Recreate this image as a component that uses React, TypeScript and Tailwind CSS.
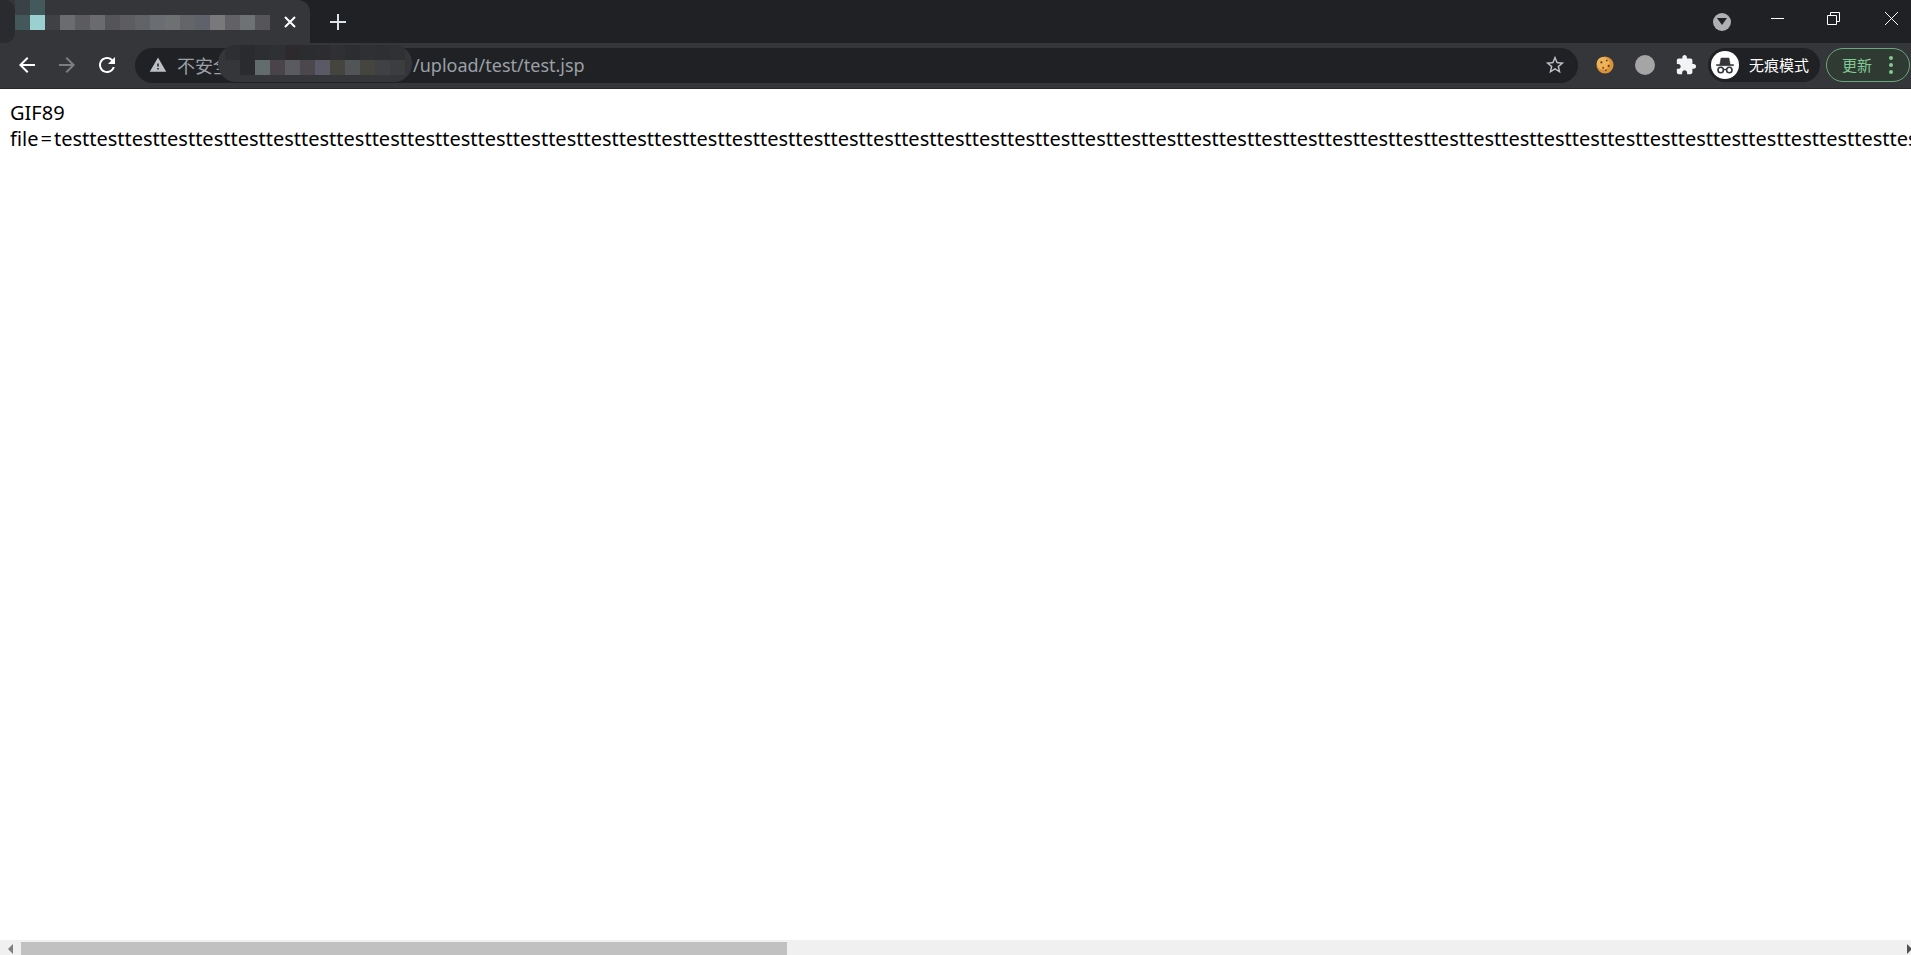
const tabTop = ['#3b4246', '#44595c'];
const tabRow = ['#44585c', '#9bd0d0', '#3f4145', '#6b6c6e', '#5c5b60', '#6a6b6d', '#555459', '#5d5d61', '#616367', '#6a6d71', '#6e7072', '#636569', '#5f626b', '#79797b', '#626165', '#6e7274', '#55555a'];
const urlTop = ['#2e2f32', '#2a2b2e', '#2d2e31', '#2f3033', '#2c2a2c', '#2b2c2f', '#2d2d30', '#2f3033', '#2c2d2f', '#2f3033', '#2e2f32', '#303134'];
const urlRow = ['#35363a', '#2a2b2e', '#636c6d', '#4a4347', '#5a5a61', '#4c474c', '#5a5a66', '#45443f', '#515558', '#46443f', '#404145', '#3c3d3e'];

const Tiles = ({ colors }: { colors: string[] }) => (
  <div className="flex h-[15px]">
    {colors.map((c, i) => (
      <div key={i} className="w-[15px] h-[15px]" style={{ backgroundColor: c }} />
    ))}
  </div>
);

const Icon = ({ d, className }: { d: string; className: string }) => (
  <svg viewBox="0 0 24 24" className={className} fill="currentColor">
    <path d={d} />
  </svg>
);

const App = () => {
  return (
    <div className="h-[955px] w-[1911px] flex flex-col overflow-hidden bg-white font-['Noto_Sans',sans-serif]">
      {/* Tab strip */}
      <div className="h-[43px] shrink-0 flex items-center bg-[#202124] relative">
        <div className="w-[310px] h-[43px] bg-[#35363a] rounded-tr-[12px] relative flex items-center justify-end pr-[14px]">
          <div className="absolute left-0 top-0 w-[15px] h-[43px] bg-[#2a2b2e] rounded-r-[10px]" />
          <div className="absolute left-[15px] top-0 flex flex-col">
            <Tiles colors={tabTop} />
            <Tiles colors={tabRow} />
          </div>
          <svg viewBox="0 0 12 12" className="w-[12px] h-[12px] text-white" fill="none" stroke="currentColor" strokeWidth="2">
            <path d="M1 1l10 10M11 1L1 11" />
          </svg>
        </div>
        <svg viewBox="0 0 16 16" className="w-[16px] h-[16px] ml-[20px] text-[#dee1e6]" fill="none" stroke="currentColor" strokeWidth="2">
          <path d="M8 0v16M0 8h16" />
        </svg>
        <div className="flex-1" />
        <div className="w-[18px] h-[18px] rounded-full bg-[#aeb0b3] flex items-center justify-center">
          <div className="w-0 h-0 border-l-[5px] border-r-[5px] border-t-[7px] border-l-transparent border-r-transparent border-t-[#202124]" />
        </div>
        <div className="w-[13px] h-px bg-white ml-[40px] mb-[7px]" />
        <svg viewBox="0 0 13 13" className="w-[13px] h-[13px] ml-[43px] mb-[6px] text-white" fill="none" stroke="currentColor">
          <path d="M.5 3.5h9v9h-9zM3.5 3V.5h9v9H10" />
        </svg>
        <svg viewBox="0 0 13 13" className="w-[13px] h-[13px] ml-[45px] mr-[13px] mb-[6px] text-white" fill="none" stroke="currentColor">
          <path d="M0 0l13 13M13 0L0 13" />
        </svg>
      </div>

      {/* Toolbar */}
      <div className="h-[46px] shrink-0 flex items-center bg-[#35363a] border-b border-[#27282b] relative pl-[15px] pb-[1px]">
        <Icon d="M20 11H7.83l5.59-5.59L12 4l-8 8 8 8 1.41-1.41L7.83 13H20v-2z" className="w-[24px] h-[24px] text-white" />
        <Icon d="M12 4l-1.41 1.41L16.17 11H4v2h12.17l-5.58 5.59L12 20l8-8z" className="w-[24px] h-[24px] text-[#7c7e81] ml-[16px]" />
        <Icon d="M17.65 6.35A7.958 7.958 0 0 0 12 4c-4.42 0-7.99 3.58-7.99 8s3.57 8 7.99 8c3.73 0 6.84-2.55 7.73-6h-2.08A5.99 5.99 0 0 1 12 18c-3.31 0-6-2.69-6-6s2.69-6 6-6c1.66 0 3.14.69 4.22 1.78L13 11h7V4l-2.35 2.35z" className="w-[24px] h-[24px] text-white ml-[16px]" />

        {/* Address bar */}
        <div className="w-[1443px] h-[35px] ml-[16px] bg-[#202124] rounded-full flex items-center relative">
          <Icon d="M1 21h22L12 2 1 21zm12-3h-2v-2h2v2zm0-4h-2v-4h2v4z" className="w-[18px] h-[18px] text-[#bdc1c6] ml-[14px]" />
          <span className="ml-[10px] text-[18px] text-[#9aa0a6] w-[236px] shrink-0 whitespace-nowrap font-['Noto_Sans_CJK_SC',sans-serif]">不安全</span>
          <span className="text-[18px] text-[#9aa0a6] whitespace-nowrap">/upload/test/test.jsp</span>
          <div className="flex-1" />
          <Icon d="M22 9.24l-7.19-.62L12 2 9.19 8.63 2 9.24l5.46 4.73L5.82 21 12 17.27 18.18 21l-1.63-7.03L22 9.24zM12 15.4l-3.76 2.27 1-4.28-3.32-2.88 4.38-.38L12 6.1l1.71 4.04 4.38.38-3.32 2.88 1 4.28L12 15.4z" className="w-[22px] h-[22px] text-[#bdc1c6] mr-[12px]" />
          <div className="absolute left-[83px] top-[-3px] w-[194px] h-[37px] bg-[#35363a] rounded-[18px] overflow-hidden flex flex-col pl-[7px]">
            <Tiles colors={urlTop} />
            <Tiles colors={urlRow} />
          </div>
        </div>

        {/* Cookie extension */}
        <svg viewBox="0 0 20 20" className="w-[18px] h-[18px] ml-[18px]">
          <circle cx="10" cy="10" r="9.5" fill="#d9933a" />
          <circle cx="8" cy="8" r="7" fill="#efb35a" />
          <circle cx="6" cy="7" r="1.2" fill="#6b3a12" />
          <circle cx="12" cy="5" r="1" fill="#7a4415" />
          <circle cx="14" cy="11" r="1.2" fill="#6b3a12" />
          <circle cx="8" cy="13" r="1.1" fill="#7a4415" />
          <circle cx="11" cy="16" r="0.9" fill="#6b3a12" />
        </svg>
        <div className="w-[20px] h-[20px] rounded-full bg-[#a5a5a5] ml-[21px]" />
        <Icon d="M20.5 11H19V7c0-1.1-.9-2-2-2h-4V3.5C13 2.12 11.88 1 10.5 1S8 2.12 8 3.5V5H4c-1.1 0-1.99.9-1.99 2v3.8H3.5c1.49 0 2.7 1.21 2.7 2.7s-1.21 2.7-2.7 2.7H2V20c0 1.1.9 2 2 2h3.8v-1.5c0-1.49 1.21-2.7 2.7-2.7 1.49 0 2.7 1.21 2.7 2.7V22H17c1.1 0 2-.9 2-2v-4h1.5c1.38 0 2.5-1.12 2.5-2.5S21.88 11 20.5 11z" className="w-[22px] h-[22px] text-[#f1f3f4] ml-[20px]" />

        {/* Incognito pill */}
        <div className="w-[112px] h-[34px] ml-[11px] rounded-full bg-[#202124] flex items-center pl-[3px]">
          <div className="w-[28px] h-[28px] rounded-full bg-white flex items-center justify-center">
            <svg viewBox="0 0 24 24" className="w-[24px] h-[24px]" fill="none" stroke="#35363a">
              <path d="M3.5 11.5h17v1.2h-17zM8 5h8l1.2 6.5H6.8z" fill="#35363a" strokeWidth="0.5" />
              <circle cx="7.7" cy="17" r="2.7" strokeWidth="1.6" />
              <circle cx="16.3" cy="17" r="2.7" strokeWidth="1.6" />
              <path d="M10.4 16.5h3.2" strokeWidth="1.4" />
            </svg>
          </div>
          <span className="ml-[10px] text-[15px] text-white whitespace-nowrap font-['Noto_Sans_CJK_SC',sans-serif]">无痕模式</span>
        </div>

        {/* Update button */}
        <div className="w-[84px] h-[34px] ml-[6px] rounded-full border-[1.5px] border-[#6aa87e] bg-[#2f3a33] flex items-center pl-[15px]">
          <span className="text-[15px] text-[#81c995] whitespace-nowrap font-['Noto_Sans_CJK_SC',sans-serif]">更新</span>
          <div className="ml-[17px] flex flex-col gap-[3px]">
            <div className="w-[4px] h-[4px] rounded-full bg-[#81c995]" />
            <div className="w-[4px] h-[4px] rounded-full bg-[#81c995]" />
            <div className="w-[4px] h-[4px] rounded-full bg-[#81c995]" />
          </div>
        </div>
      </div>

      {/* Page */}
      <div className="flex-1 min-h-0 overflow-hidden pl-[10px] pt-[11px] text-[20px] leading-[26px] text-black whitespace-nowrap">
        <div>GIF89</div>
        <div>file<span className="mx-[2px]">=</span>{'test'.repeat(60)}</div>
      </div>

      {/* Horizontal scrollbar */}
      <div className="h-[15px] shrink-0 bg-[#f0f0f0] flex items-end overflow-hidden">
        <div className="w-[21px] h-[13px] flex items-center pl-[8px]">
          <div className="w-0 h-0 border-y-[5px] border-r-[5px] border-y-transparent border-r-[#7f7f7f]" />
        </div>
        <div className="w-[766px] h-[13px] bg-[#c1c1c1]" />
        <div className="flex-1" />
        <div className="w-[4px] h-[13px] flex items-center">
          <div className="w-0 h-0 border-y-[5px] border-l-[5px] border-y-transparent border-l-[#505050]" />
        </div>
      </div>
    </div>
  );
};

export default App;
